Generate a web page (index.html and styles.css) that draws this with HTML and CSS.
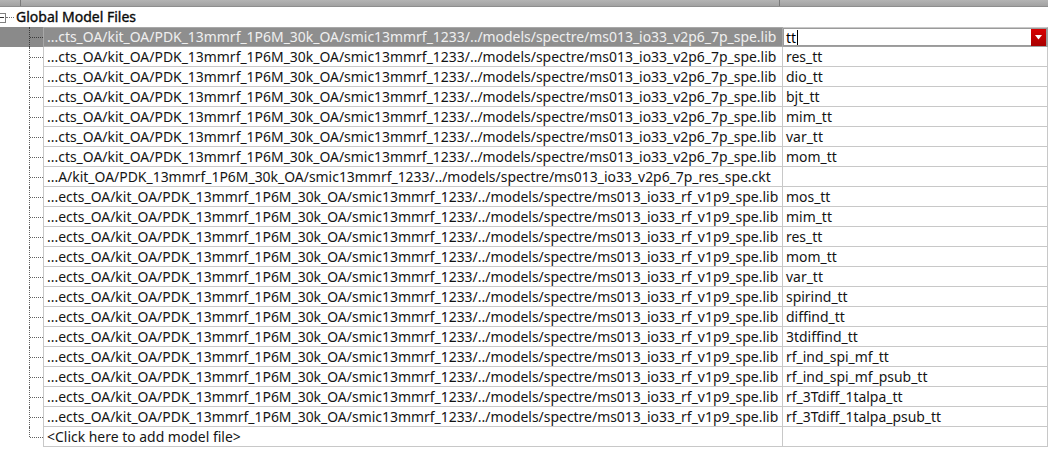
FILE: index.html
```html
<!DOCTYPE html>
<html>
<head>
<meta charset="utf-8">
<link rel="stylesheet" href="styles.css">
</head>
<body>
<div class="view">
  <div class="header">
    <div class="hcell h0"></div>
    <div class="hcell h1"></div>
    <div class="hcell h2"></div>
  </div>
  <div class="root">
    <span class="expander"></span>
    <span class="rootline"></span>
    <span class="roottext">Global Model Files</span>
  </div>
  <div class="rows">
    <div class="row selected">
      <div class="indent"></div>
      <div class="cell path">...cts_OA/kit_OA/PDK_13mmrf_1P6M_30k_OA/smic13mmrf_1233/../models/spectre/ms013_io33_v2p6_7p_spe.lib</div>
      <div class="cell section editing">
        <div class="editor"><span class="edittext">tt</span><span class="caret"></span><span class="spacer"></span><span class="dropbtn"><svg width="7" height="5" viewBox="0 0 7 5"><path d="M0 0 L7 0 L3.5 4.5 Z" fill="#fff"/></svg></span></div>
      </div>
    </div>
    <div class="row"><div class="indent"></div><div class="cell path">...cts_OA/kit_OA/PDK_13mmrf_1P6M_30k_OA/smic13mmrf_1233/../models/spectre/ms013_io33_v2p6_7p_spe.lib</div><div class="cell section">res_tt</div></div>
    <div class="row"><div class="indent"></div><div class="cell path">...cts_OA/kit_OA/PDK_13mmrf_1P6M_30k_OA/smic13mmrf_1233/../models/spectre/ms013_io33_v2p6_7p_spe.lib</div><div class="cell section">dio_tt</div></div>
    <div class="row"><div class="indent"></div><div class="cell path">...cts_OA/kit_OA/PDK_13mmrf_1P6M_30k_OA/smic13mmrf_1233/../models/spectre/ms013_io33_v2p6_7p_spe.lib</div><div class="cell section">bjt_tt</div></div>
    <div class="row"><div class="indent"></div><div class="cell path">...cts_OA/kit_OA/PDK_13mmrf_1P6M_30k_OA/smic13mmrf_1233/../models/spectre/ms013_io33_v2p6_7p_spe.lib</div><div class="cell section">mim_tt</div></div>
    <div class="row"><div class="indent"></div><div class="cell path">...cts_OA/kit_OA/PDK_13mmrf_1P6M_30k_OA/smic13mmrf_1233/../models/spectre/ms013_io33_v2p6_7p_spe.lib</div><div class="cell section">var_tt</div></div>
    <div class="row"><div class="indent"></div><div class="cell path">...cts_OA/kit_OA/PDK_13mmrf_1P6M_30k_OA/smic13mmrf_1233/../models/spectre/ms013_io33_v2p6_7p_spe.lib</div><div class="cell section">mom_tt</div></div>
    <div class="row"><div class="indent"></div><div class="cell path">...A/kit_OA/PDK_13mmrf_1P6M_30k_OA/smic13mmrf_1233/../models/spectre/ms013_io33_v2p6_7p_res_spe.ckt</div><div class="cell section"></div></div>
    <div class="row"><div class="indent"></div><div class="cell path">...ects_OA/kit_OA/PDK_13mmrf_1P6M_30k_OA/smic13mmrf_1233/../models/spectre/ms013_io33_rf_v1p9_spe.lib</div><div class="cell section">mos_tt</div></div>
    <div class="row"><div class="indent"></div><div class="cell path">...ects_OA/kit_OA/PDK_13mmrf_1P6M_30k_OA/smic13mmrf_1233/../models/spectre/ms013_io33_rf_v1p9_spe.lib</div><div class="cell section">mim_tt</div></div>
    <div class="row"><div class="indent"></div><div class="cell path">...ects_OA/kit_OA/PDK_13mmrf_1P6M_30k_OA/smic13mmrf_1233/../models/spectre/ms013_io33_rf_v1p9_spe.lib</div><div class="cell section">res_tt</div></div>
    <div class="row"><div class="indent"></div><div class="cell path">...ects_OA/kit_OA/PDK_13mmrf_1P6M_30k_OA/smic13mmrf_1233/../models/spectre/ms013_io33_rf_v1p9_spe.lib</div><div class="cell section">mom_tt</div></div>
    <div class="row"><div class="indent"></div><div class="cell path">...ects_OA/kit_OA/PDK_13mmrf_1P6M_30k_OA/smic13mmrf_1233/../models/spectre/ms013_io33_rf_v1p9_spe.lib</div><div class="cell section">var_tt</div></div>
    <div class="row"><div class="indent"></div><div class="cell path">...ects_OA/kit_OA/PDK_13mmrf_1P6M_30k_OA/smic13mmrf_1233/../models/spectre/ms013_io33_rf_v1p9_spe.lib</div><div class="cell section">spirind_tt</div></div>
    <div class="row"><div class="indent"></div><div class="cell path">...ects_OA/kit_OA/PDK_13mmrf_1P6M_30k_OA/smic13mmrf_1233/../models/spectre/ms013_io33_rf_v1p9_spe.lib</div><div class="cell section">diffind_tt</div></div>
    <div class="row"><div class="indent"></div><div class="cell path">...ects_OA/kit_OA/PDK_13mmrf_1P6M_30k_OA/smic13mmrf_1233/../models/spectre/ms013_io33_rf_v1p9_spe.lib</div><div class="cell section">3tdiffind_tt</div></div>
    <div class="row"><div class="indent"></div><div class="cell path">...ects_OA/kit_OA/PDK_13mmrf_1P6M_30k_OA/smic13mmrf_1233/../models/spectre/ms013_io33_rf_v1p9_spe.lib</div><div class="cell section">rf_ind_spi_mf_tt</div></div>
    <div class="row"><div class="indent"></div><div class="cell path">...ects_OA/kit_OA/PDK_13mmrf_1P6M_30k_OA/smic13mmrf_1233/../models/spectre/ms013_io33_rf_v1p9_spe.lib</div><div class="cell section">rf_ind_spi_mf_psub_tt</div></div>
    <div class="row"><div class="indent"></div><div class="cell path">...ects_OA/kit_OA/PDK_13mmrf_1P6M_30k_OA/smic13mmrf_1233/../models/spectre/ms013_io33_rf_v1p9_spe.lib</div><div class="cell section">rf_3Tdiff_1talpa_tt</div></div>
    <div class="row"><div class="indent"></div><div class="cell path">...ects_OA/kit_OA/PDK_13mmrf_1P6M_30k_OA/smic13mmrf_1233/../models/spectre/ms013_io33_rf_v1p9_spe.lib</div><div class="cell section">rf_3Tdiff_1talpa_psub_tt</div></div>
    <div class="row last"><div class="indent"></div><div class="cell path">&lt;Click here to add model file&gt;</div><div class="cell section"></div></div>
  </div>
</div>
</body>
</html>
```

FILE: styles.css
```css
html, body {
  margin: 0;
  padding: 0;
  background: #ffffff;
}
body {
  font-family: "Noto Sans", "Open Sans", sans-serif;
  font-size: 13.94px;
  color: #141414;
  width: 1048px;
  height: 456px;
  overflow: hidden;
}
.view {
  width: 1048px;
}
.header {
  display: flex;
  height: 7px;
  background: linear-gradient(#b4b4b4, #a2a2a2);
  border-bottom: 1px solid #8e8e8e;
  box-sizing: border-box;
}
.hcell {
  height: 100%;
  box-sizing: border-box;
  border-right: 1px solid #7a7a7a;
}
.h0 { width: 21px; }
.h1 { width: 759px; }
.h2 { flex: 1; border-right: none; }

.root {
  position: relative;
  height: 20px;
  display: flex;
  align-items: center;
}
.expander {
  position: absolute;
  left: -4px;
  top: 6px;
  width: 8px;
  height: 8px;
  border: 1px solid #808080;
  background: #fff;
}
.expander::after {
  content: "";
  position: absolute;
  left: 2px;
  top: 3px;
  width: 5px;
  height: 1px;
  background: #333;
}
.rootline {
  position: absolute;
  left: 6px;
  top: 10px;
  width: 8px;
  border-top: 1px dotted #707070;
}
.roottext {
  margin-left: 16px;
  font-size: 14px;
  color: #0a0a0a;
  line-height: 20px;
  -webkit-text-stroke: 0.35px #0a0a0a;
}

.rows {
  display: flex;
  flex-direction: column;
}
.row {
  display: flex;
  height: 20px;
}
.indent {
  position: relative;
  width: 43px;
  flex: none;
}
.indent::before {
  content: "";
  position: absolute;
  left: 29px;
  top: 0;
  height: 20px;
  border-left: 1px dotted #606060;
}
.row.last .indent::before {
  height: 10px;
}
.indent::after {
  content: "";
  position: absolute;
  left: 30px;
  top: 10px;
  width: 13px;
  border-top: 1px dotted #606060;
}
.cell {
  box-sizing: border-box;
  height: 20px;
  line-height: 19px;
  border-right: 1px solid #c8c8c8;
  border-bottom: 1px solid #c8c8c8;
  white-space: nowrap;
  overflow: hidden;
}
.path {
  width: 740px;
  padding-left: 3px;
  border-left: 1px solid #c8c8c8;
}
.section {
  width: 265px;
  padding-left: 3px;
}
.row:first-child .cell {
  border-top: 1px solid #c8c8c8;
  line-height: 18px;
}

.row.selected {
  background: #8a8a8a;
}
.row.selected .path {
  background: #8e8e8e;
  color: #f0f0f0;
  border-color: #a8a8a8;
}
.row.selected .indent::before,
.row.selected .indent::after {
  border-color: #3a3a3a;
}
.section.editing {
  padding: 0;
  background: #ffffff;
  border-color: #a0a0a0;
}
.editor {
  display: flex;
  align-items: center;
  height: 100%;
  box-sizing: border-box;
  border: 1px solid #9a9a9a;
  padding-left: 2px;
  color: #000;
}
.edittext {
  line-height: 17px;
}
.caret {
  width: 1px;
  height: 15px;
  background: #000;
  margin-left: 1px;
}
.spacer { flex: 1; }
.dropbtn {
  width: 15px;
  height: 17px;
  background: linear-gradient(#d80000, #a80000);
  display: flex;
  align-items: center;
  justify-content: center;
}
```
